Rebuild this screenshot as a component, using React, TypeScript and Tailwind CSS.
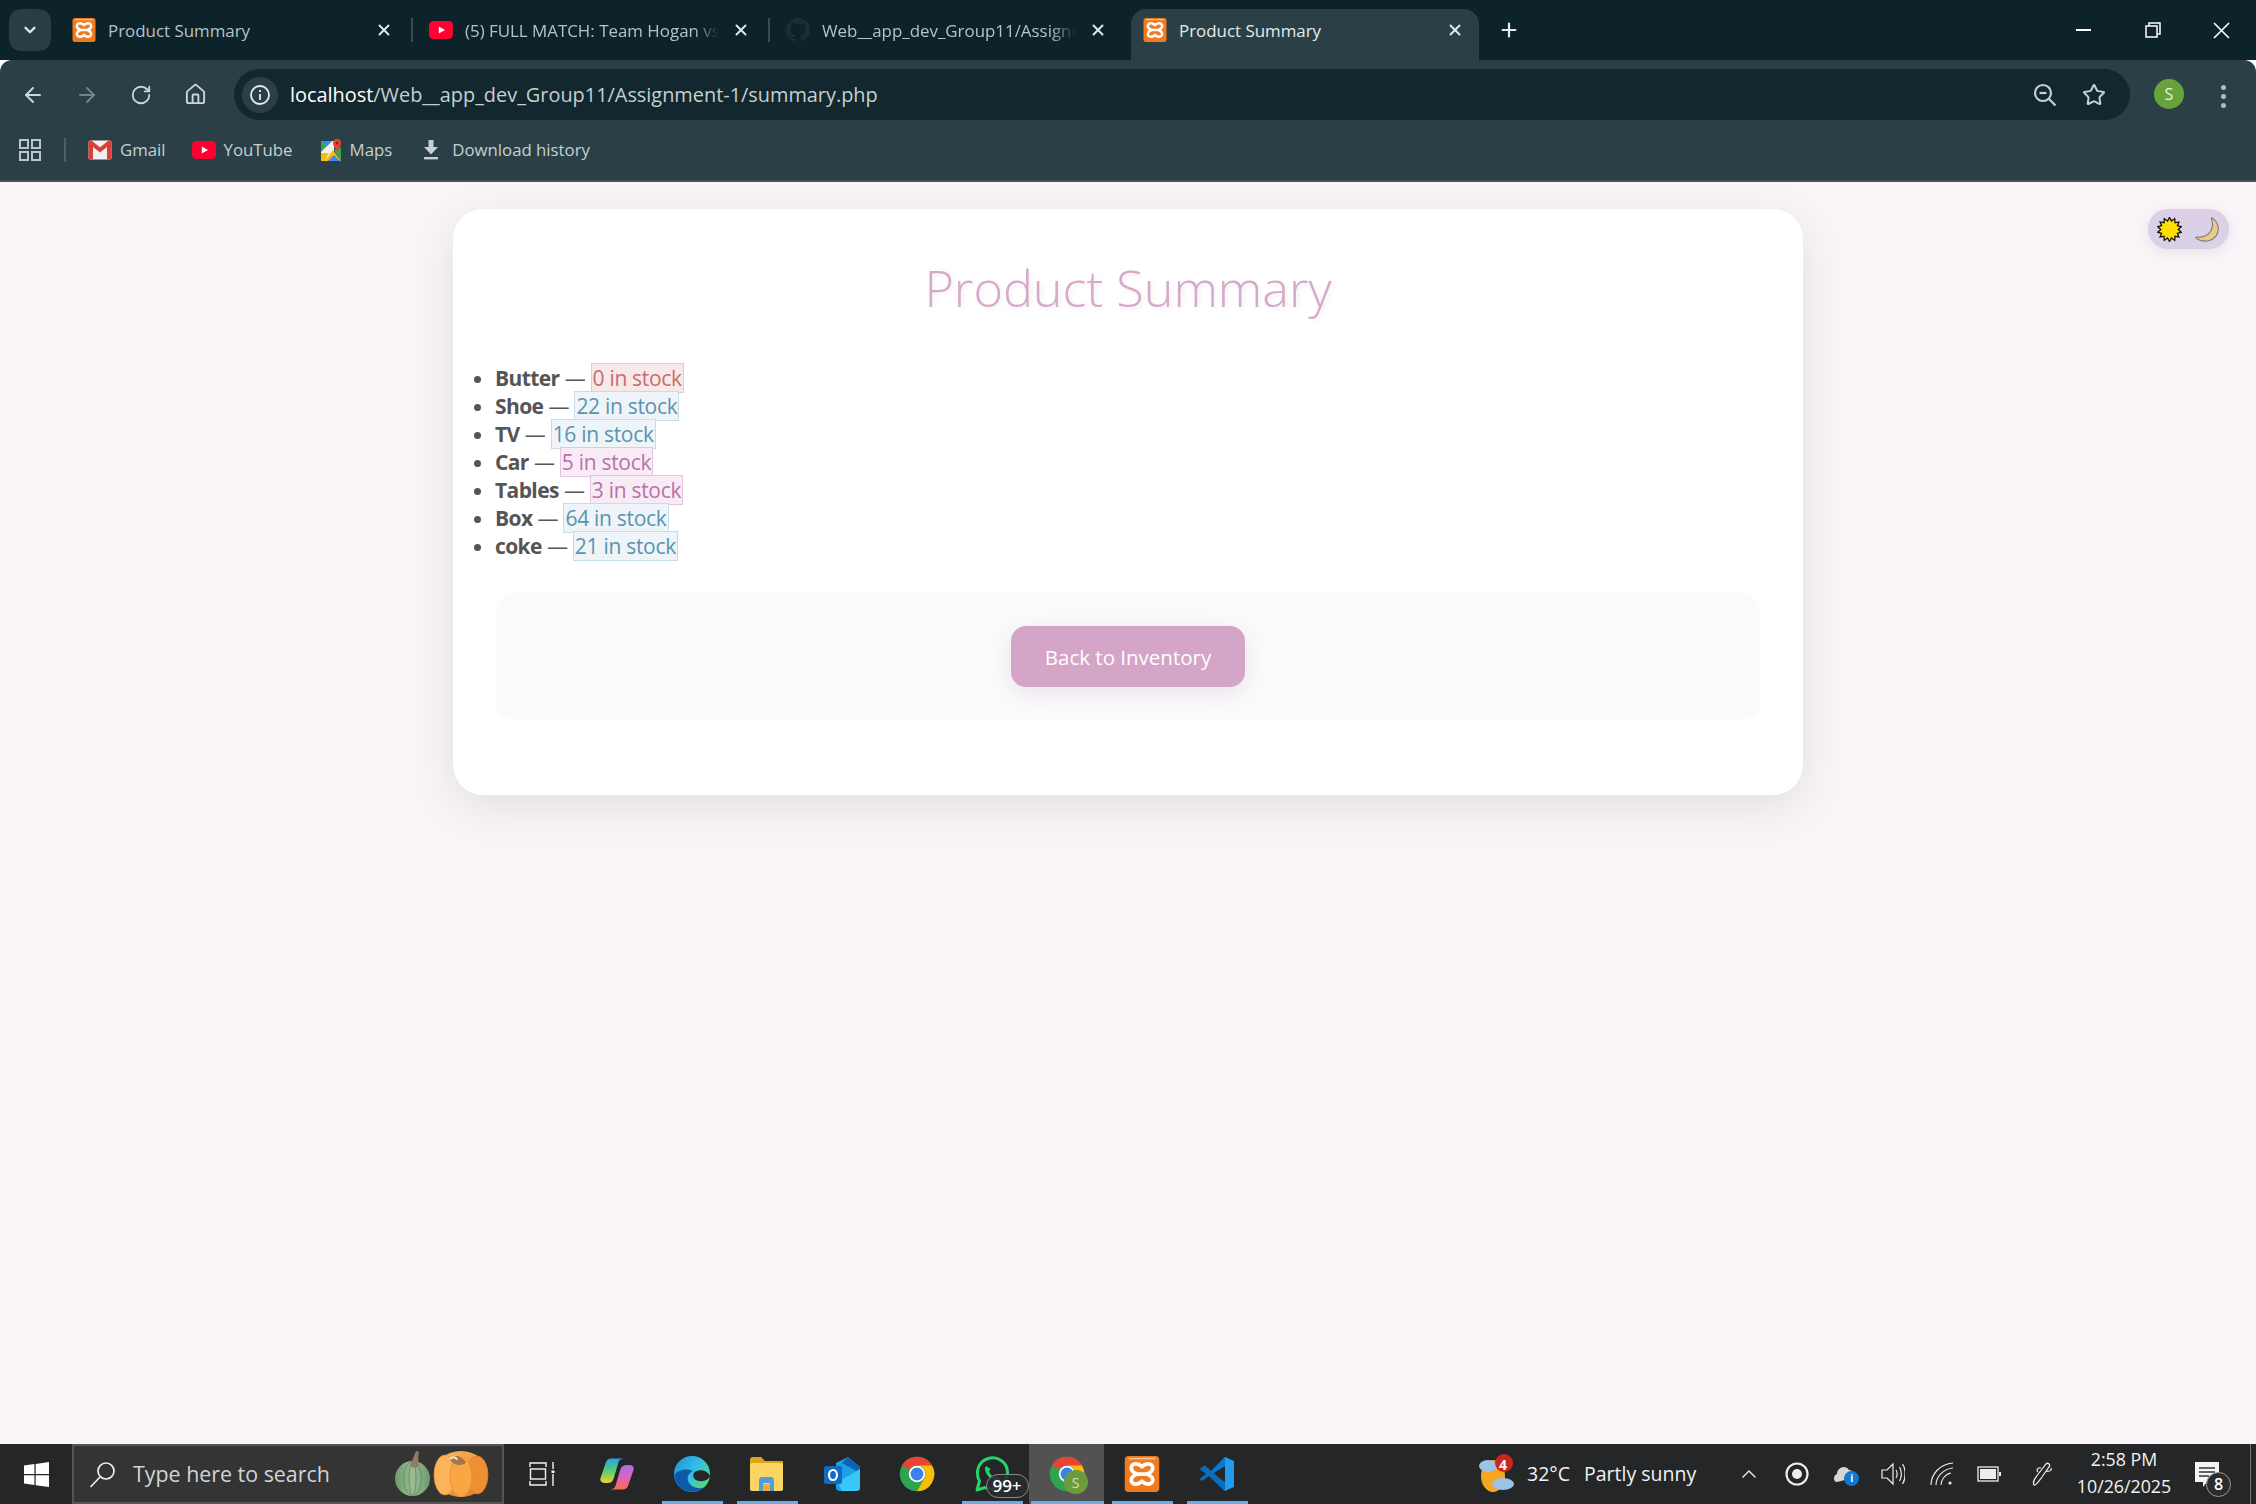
import React from "react";
import { ArrowLeft, ArrowRight, RotateCw, House, Star, X, Plus, ChevronDown, ChevronUp } from "lucide-react";

const ui = "font-['Open_Sans','Noto_Sans',sans-serif]";

function Xampp({ s = 24 }: { s?: number }) {
  return (
    <svg width={s} height={s} viewBox="0 0 24 24" className="shrink-0">
      <rect x="0.5" y="0" width="23" height="24" rx="2.5" fill="#f07a1c" />
      <rect x="3" y="1.2" width="18" height="1" fill="#f9c69a" />
      <path d="M12 7.2 C10 5 6.2 4.4 5 7 C4.2 9 6 11 8.6 12 C6 13 4.2 15 5 17 C6.2 19.6 10 19 12 16.8 C14 19 17.8 19.6 19 17 C19.8 15 18 13 15.4 12 C18 11 19.8 9 19 7 C17.8 4.4 14 5 12 7.2 Z M8.6 12 H15.4" fill="none" stroke="#fff" strokeWidth="2.5" strokeLinejoin="round" />
    </svg>
  );
}

function Yt() {
  return (
    <svg width="24" height="24" viewBox="0 0 24 24" className="shrink-0">
      <rect x="0" y="3" width="24" height="18" rx="4.5" fill="#ff0033" />
      <path d="M9.8 8.4 L16 12 L9.8 15.6 Z" fill="#fff" />
    </svg>
  );
}

function GitHub() {
  return (
    <svg width="24" height="24" viewBox="0 0 16 16" className="shrink-0" fill="#1c2f36">
      <path d="M8 0C3.58 0 0 3.58 0 8c0 3.54 2.29 6.53 5.47 7.59.4.07.55-.17.55-.38 0-.19-.01-.82-.01-1.49-2.01.37-2.53-.49-2.69-.94-.09-.23-.48-.94-.82-1.13-.28-.15-.68-.52-.01-.53.63-.01 1.08.58 1.23.82.72 1.21 1.87.87 2.33.66.07-.52.28-.87.51-1.07-1.78-.2-3.64-.89-3.64-3.95 0-.87.31-1.59.82-2.15-.08-.2-.36-1.02.08-2.12 0 0 .67-.21 2.2.82.64-.18 1.32-.27 2-.27s1.36.09 2 .27c1.53-1.04 2.2-.82 2.2-.82.44 1.1.16 1.92.08 2.12.51.56.82 1.27.82 2.15 0 3.07-1.87 3.75-3.65 3.95.29.25.54.73.54 1.48 0 1.07-.01 1.93-.01 2.2 0 .21.15.46.55.38A8 8 0 0 0 16 8c0-4.42-3.58-8-8-8z" />
    </svg>
  );
}

function Tab({ icon, title, active, faded, sep }: { icon: React.ReactNode; title: string; active?: boolean; faded?: boolean; sep?: boolean }) {
  return (
    <div className={`relative h-[51px] flex items-center pl-[12px] pr-[12px] pb-[9px] ${active ? "w-[348px] bg-[#2a4046] rounded-t-[15px]" : "w-[357px]"}`}>
      {icon}
      <span className={`ml-[12px] mt-[2px] w-[254px] overflow-hidden whitespace-nowrap text-[16.9px] ${active ? "text-[#e4ebec]" : "text-[#b4c3c6]"} ${faded ? "[mask-image:linear-gradient(to_right,black_90%,transparent)]" : ""}`}>{title}</span>
      <X size={18} strokeWidth={2.6} className={`absolute top-[12px] text-[#dfe7e8] ${active ? "right-[15px]" : "right-[24px]"}`} />
      {sep && <div className="absolute right-[4px] top-[9px] w-[2px] h-[24px] bg-[#3a4d52]" />}
    </div>
  );
}

function Gmail() {
  return (
    <svg width="24" height="20" viewBox="0 0 24 20" className="shrink-0">
      <rect x="0.5" y="0.5" width="23" height="19" rx="2" fill="#f4eeee" />
      <path d="M0.5 2.5 V19.5 H5 V7 L12 12.5 L19 7 V19.5 H23.5 V2.5 C23.5 0.5 21.5 0 20 1 L12 7.2 L4 1 C2.5 0 0.5 0.5 0.5 2.5 Z" fill="#d9403a" />
    </svg>
  );
}

function Maps() {
  return (
    <svg width="21" height="24" viewBox="0 0 21 24" className="shrink-0">
      <path d="M0 3 H13 V23 H0 Z" fill="#f2f2f2" />
      <path d="M0 3 H11 L0 14 Z" fill="#34a853" />
      <path d="M1 3 H11 L6 8 Z" fill="#4285f4" />
      <path d="M0 23 L0 15 L8 15 L4 23 Z" fill="#fbbc04" />
      <path d="M4 23 L12 12 L20 23 Z" fill="#fbbc04" />
      <path d="M7 23 L13 17 L19 23 Z" fill="#4285f4" />
      <path d="M13 12 L20 9 L20 23 L18 20 Z" fill="#34a853" />
      <path d="M16 14 C13.5 9 12 8 12 5 A4 4 0 0 1 20 5 C20 8 18.5 9 16 14 Z" fill="#ea4335" />
      <circle cx="16" cy="5" r="1.5" fill="#8c2219" />
    </svg>
  );
}

function Bookmark({ icon, label, ml }: { icon: React.ReactNode; label: string; ml: string }) {
  return (
    <div className={`flex items-center ${ml}`}>
      {icon}
      <span className="ml-[8px] text-[16.8px] text-[#c5d0d2] whitespace-nowrap">{label}</span>
    </div>
  );
}

function Sun() {
  const pts: string[] = [];
  const n = 14;
  for (let i = 0; i < n * 2; i++) {
    const r = i % 2 === 0 ? 11.6 : 8.4;
    const a = (i * Math.PI) / n;
    pts.push(`${12 + r * Math.sin(a)},${12 - r * Math.cos(a)}`);
  }
  return (
    <svg width="25" height="25" viewBox="0 0 24 24">
      <polygon points={pts.join(" ")} fill="#ffdf00" stroke="#111" strokeWidth="1.2" />
    </svg>
  );
}

function Moon() {
  return (
    <svg width="25" height="25" viewBox="0 0 24 24">
      <path d="M16.5 0.8 C22.5 5 24 12.5 20.3 18 C16.5 23.5 7.5 25 1 20.5 C0.5 20 0.8 19.2 1.6 19.3 C7 20 13 18 15.5 13 C17.2 9.5 17 5 15.7 1.5 C15.6 0.8 16 0.5 16.5 0.8 Z" fill="#eac98d" stroke="#77777f" strokeWidth="1" />
    </svg>
  );
}

const items: { name: string; qty: number; kind: "red" | "blue" | "pink" }[] = [
  { name: "Butter", qty: 0, kind: "red" },
  { name: "Shoe", qty: 22, kind: "blue" },
  { name: "TV", qty: 16, kind: "blue" },
  { name: "Car", qty: 5, kind: "pink" },
  { name: "Tables", qty: 3, kind: "pink" },
  { name: "Box", qty: 64, kind: "blue" },
  { name: "coke", qty: 21, kind: "blue" },
];

const badge = {
  red: "bg-[#f8e9e9] border-[#efc4c4] text-[#c96b6b]",
  blue: "bg-[#eef4f8] border-[#c6dde8] text-[#5b94ae]",
  pink: "bg-[#f7ecf5] border-[#e6c3df] text-[#b971a9]",
};

function Chrome({ s = 36 }: { s?: number }) {
  return (
    <svg width={s} height={s} viewBox="0 0 48 48">
      <circle cx="24" cy="24" r="23" fill="#2da44e" />
      <path d="M24 1 A23 23 0 0 1 44 12.5 L24 12.5 A11.5 11.5 0 0 0 14 18.2 L4 12.5 A23 23 0 0 1 24 1 Z" fill="#ea4335" />
      <path d="M44 12.5 A23 23 0 0 1 24 47 L34 29.7 A11.5 11.5 0 0 0 24 12.5 Z" fill="#fbbc04" />
      <circle cx="24" cy="24" r="11" fill="#fff" />
      <circle cx="24" cy="24" r="8.6" fill="#3b82e8" />
    </svg>
  );
}

function TaskCell({ children, underline, active }: { children?: React.ReactNode; underline?: boolean; active?: boolean }) {
  return (
    <div className={`relative w-[75px] h-full flex items-center justify-center ${active ? "bg-[#525252]" : ""}`}>
      {children}
      {underline && <div className={`absolute bottom-0 h-[3px] bg-[#66ace6] ${active ? "left-[2px] right-0" : "left-[8px] right-[6px]"}`} />}
    </div>
  );
}

export default function App() {
  return (
    <div className={`h-[1504px] w-[2256px] flex flex-col overflow-hidden ${ui}`}>
      {/* Tab strip */}
      <div className="relative h-[60px] shrink-0 bg-[#0b2329] flex items-end">
        <div className="ml-[9px] mb-[9px] w-[42px] h-[42px] rounded-[12px] bg-[#283e44] flex items-center justify-center">
          <ChevronDown size={18} strokeWidth={3} className="text-[#e4ebec]" />
        </div>
        <div className="ml-[9px] flex items-end">
          <Tab icon={<Xampp />} title="Product Summary" sep />
          <Tab icon={<Yt />} title="(5) FULL MATCH: Team Hogan vs" faded sep />
          <Tab icon={<GitHub />} title="Web__app_dev_Group11/Assignment" faded />
          <Tab icon={<Xampp />} title="Product Summary" active />
        </div>
        <Plus size={22} strokeWidth={2.4} className="mb-[19px] ml-[19px] text-[#e4ebec]" />
        <div className="ml-auto flex h-[60px] items-center">
          <div className="w-[69px] flex justify-center"><div className="w-[15px] h-[2px] bg-white" /></div>
          <div className="w-[69px] flex justify-center">
            <svg width="16" height="16" viewBox="0 0 16 16" fill="none" stroke="#fff" strokeWidth="1.5"><rect x="1" y="4" width="11" height="11" /><path d="M4 4 V1 H15 V12 H12" /></svg>
          </div>
          <div className="w-[69px] flex justify-center">
            <svg width="17" height="17" viewBox="0 0 17 17" stroke="#fff" strokeWidth="1.6"><path d="M1 1 L16 16 M16 1 L1 16" /></svg>
          </div>
        </div>
      </div>

      {/* Toolbar */}
      <div className="h-[60px] shrink-0 bg-[#2a4046] rounded-t-[12px] flex items-start pt-[9px]">
        <div className="flex h-[51px] items-center text-[#c9d5d7] pl-[21px]">
          <ArrowLeft size={24} strokeWidth={2} />
          <ArrowRight size={24} strokeWidth={2} className="ml-[30px] text-[#71858a]" />
          <RotateCw size={22} strokeWidth={2} className="ml-[31px]" />
          <House size={23} strokeWidth={2} className="ml-[32px]" />
        </div>
        <div className="ml-[27px] w-[1896px] h-[51px] rounded-full bg-[#12282e] flex items-center pl-[8px] pr-[24px]">
          <div className="w-[36px] h-[36px] rounded-full bg-[#2a4046] flex items-center justify-center">
            <svg width="22" height="22" viewBox="0 0 22 22" fill="none" stroke="#e4ebec" strokeWidth="1.8"><circle cx="11" cy="11" r="9" /><path d="M11 10 V16 M11 6 V8" /></svg>
          </div>
          <div className="ml-[12px] text-[19.9px] whitespace-nowrap text-[#c5d0d2]"><span className="text-white">localhost</span>/Web__app_dev_Group11/Assignment-1/summary.php</div>
          <svg width="24" height="24" viewBox="0 0 24 24" fill="none" stroke="#c5d0d2" strokeWidth="2.2" className="ml-auto -translate-x-[2px]"><circle cx="10" cy="10" r="8" /><path d="M15.8 15.8 L22.5 22.5" /><path d="M6.5 10 H13.5" /></svg>
          <Star size={24} strokeWidth={2} className="ml-[23px] text-[#c5d0d2]" />
        </div>
        <div className="ml-[24px] mt-[10px] w-[30px] h-[30px] rounded-full bg-[#68a23b] flex items-center justify-center text-[#e8f1de] text-[16px]">S</div>
        <div className="ml-[37px] mt-[16px] flex flex-col gap-[4.5px]">
          <div className="w-[4.5px] h-[4.5px] rounded-full bg-[#a9c0c4]" />
          <div className="w-[4.5px] h-[4.5px] rounded-full bg-[#a9c0c4]" />
          <div className="w-[4.5px] h-[4.5px] rounded-full bg-[#a9c0c4]" />
        </div>
      </div>

      {/* Bookmarks */}
      <div className="h-[62px] shrink-0 bg-[#2a4046] border-b-[2px] border-[#455358] flex items-center pl-[19px]">
        <svg width="22" height="22" viewBox="0 0 22 22" fill="none" stroke="#b9c7ca" strokeWidth="2"><rect x="1" y="1" width="8" height="8" /><rect x="13" y="1" width="8" height="8" /><rect x="1" y="13" width="8" height="8" /><rect x="13" y="13" width="8" height="8" /></svg>
        <div className="ml-[23px] w-[2px] h-[24px] bg-[#4d6166]" />
        <Bookmark icon={<Gmail />} label="Gmail" ml="ml-[22px]" />
        <Bookmark icon={<Yt />} label="YouTube" ml="ml-[26px]" />
        <Bookmark icon={<Maps />} label="Maps" ml="ml-[28px]" />
        <div className="flex items-center ml-[31px]">
          <svg width="16" height="20" viewBox="0 0 16 20" fill="#c5d0d2" className="shrink-0"><path d="M5.5 0 H10.5 V7 H15 L8 14.5 L1 7 H5.5 Z" /><rect x="1" y="17" width="14" height="2.4" /></svg>
          <span className="ml-[13px] text-[16.8px] text-[#c5d0d2] whitespace-nowrap">Download history</span>
        </div>
      </div>

      {/* Page */}
      <div className="relative flex-1 bg-[#f8f4f8] pt-[27px]">
        <div className="absolute top-[27px] right-[27px] w-[81px] h-[40px] rounded-full bg-[#dbd0e6] shadow-[0_3px_12px_rgba(0,0,0,0.08)] flex items-center justify-between px-[9px]">
          <Sun />
          <Moon />
        </div>
        <div className="w-[1350px] mx-auto bg-white rounded-[30px] shadow-[0_12px_45px_rgba(0,0,0,0.09)] px-[42px] pt-[42px] pb-[75px]">
          <h1 className="text-[#d8a8ca] text-[50.3px] leading-[76px] -mt-[1px] font-light text-center [text-shadow:2px_2px_5px_rgba(0,0,0,0.08)]">Product Summary</h1>
          <ul className="mt-[38px] list-disc text-[21px] tracking-[-0.3px] leading-[28px] text-[#555]">
            {items.map((it) => (
              <li key={it.name}>
                <b className="font-bold tracking-[-0.6px]">{it.name}</b> — <span className={`border-[1.5px] px-[1px] ${badge[it.kind]}`}>{it.qty} in stock</span>
              </li>
            ))}
          </ul>
          <div className="mt-[33px] rounded-[20px] bg-[#fafbfb] py-[33px] flex justify-center">
            <div className="w-[234px] h-[61px] rounded-[15px] bg-[#d4a5c6] text-white text-[20.5px] pt-[1px] flex items-center justify-center shadow-[0_6px_22px_rgba(180,120,170,0.2)]">Back to Inventory</div>
          </div>
        </div>
      </div>

      {/* Taskbar */}
      <div className="h-[60px] shrink-0 bg-[#252627] flex items-stretch relative">
        <div className="w-[72px] flex items-center justify-center">
          <svg width="25" height="25" viewBox="0 0 24 24" fill="#fff"><path d="M0 3.4 L10 2 V11.4 H0 Z M11.2 1.8 L24 0 V11.4 H11.2 Z M0 12.6 H10 V22 L0 20.6 Z M11.2 12.6 H24 V24 L11.2 22.2 Z" /></svg>
        </div>
        <div className="w-[432px] bg-[#343434] border-[2.5px] border-[#555] flex items-center pl-[15px]">
          <svg width="27" height="27" viewBox="0 0 27 27" fill="none" stroke="#eee" strokeWidth="1.7"><circle cx="17" cy="10" r="8" /><path d="M11 16 L1.5 26" /></svg>
          <span className="ml-[17px] text-[21.4px] text-[#d0d5d8]">Type here to search</span>
          <svg width="94" height="46" viewBox="0 0 94 46" className="ml-auto mr-[13px]">
            <defs>
              <linearGradient id="pk" x1="0" y1="0" x2="1" y2="1"><stop offset="0" stopColor="#fbbd66" /><stop offset="1" stopColor="#e8781f" /></linearGradient>
              <linearGradient id="gp" x1="0" y1="0" x2="1" y2="0"><stop offset="0" stopColor="#6d9c6d" /><stop offset="0.5" stopColor="#9dbb92" /><stop offset="1" stopColor="#6a9a72" /></linearGradient>
            </defs>
            <ellipse cx="17.5" cy="27.5" rx="17.5" ry="17.5" fill="url(#gp)" />
            <ellipse cx="17.5" cy="27.5" rx="9" ry="17" fill="none" stroke="#5f8c62" strokeWidth="0.8" />
            <ellipse cx="17.5" cy="27.5" rx="3.5" ry="17" fill="none" stroke="#5f8c62" strokeWidth="0.8" />
            <path d="M15 15 C17 10 19 5 21 0 L24 1 C23 6 23 10 24 15 C21 17 18 17 15 15 Z" fill="#8f7a66" />
            <ellipse cx="66" cy="23" rx="27" ry="23" fill="url(#pk)" />
            <ellipse cx="50" cy="24" rx="11" ry="20" fill="#fbb45c" stroke="#e9882d" strokeWidth="0.7" />
            <ellipse cx="82" cy="24" rx="11" ry="19" fill="#ee8f33" stroke="#de7a22" strokeWidth="0.7" />
            <ellipse cx="66" cy="26" rx="11" ry="20" fill="#f9a645" stroke="#e9882d" strokeWidth="0.7" />
            <path d="M55 9 C57 5 62 4 65 6 C69 9 73 11 69 13 C65 15 58 14 55 9 Z" fill="#a5764a" />
            <path d="M55 8 C58 5 61 6 62 9" fill="none" stroke="#f2e2c8" strokeWidth="2" />
          </svg>
        </div>
        <div className="flex items-center">
          <div className="flex h-full">
            <TaskCell>
              <svg width="26" height="26" viewBox="0 0 26 26" fill="none" stroke="#f2f2f2" strokeWidth="1.4"><path d="M1 6 V2 H17 V6 M1 20 V24 H17 V20" /><rect x="1.5" y="8" width="15" height="10" /><path d="M24 1 V8 M24 13 V25" /><rect x="22.5" y="9.5" width="3" height="2.5" fill="#f2f2f2" stroke="none" /></svg>
            </TaskCell>
            <TaskCell>
              <svg width="34" height="32" viewBox="0 0 34 32">
                <defs>
                  <linearGradient id="cp1" x1="0" y1="0" x2="0" y2="1"><stop offset="0" stopColor="#2a9fe8" /><stop offset="0.55" stopColor="#5fd06a" /><stop offset="1" stopColor="#f7d02f" /></linearGradient>
                  <linearGradient id="cp2" x1="0" y1="0" x2="0" y2="1"><stop offset="0" stopColor="#a970e6" /><stop offset="0.6" stopColor="#e562b0" /><stop offset="1" stopColor="#f8703a" /></linearGradient>
                </defs>
                <path d="M11 0.5 H23 C20 1 18.5 3 18 6 L13.5 21 C12.5 24 10 25 7 25 H4 C1.5 25 -0.5 22.5 0.5 20 L6 4 C7 1.5 9 0.5 11 0.5 Z" fill="url(#cp1)" />
                <path d="M23 31.5 H11 C14 31 15.5 29 16 26 L20.5 11 C21.5 8 24 7 27 7 H30 C32.5 7 34.5 9.5 33.5 12 L28 28 C27 30.5 25 31.5 23 31.5 Z" fill="url(#cp2)" />
              </svg>
            </TaskCell>
            <TaskCell underline>
              <svg width="36" height="36" viewBox="0 0 36 36">
                <defs><linearGradient id="ed" x1="0" y1="0" x2="1" y2="0.7"><stop offset="0" stopColor="#1a8fd8" /><stop offset="0.55" stopColor="#33bfe6" /><stop offset="1" stopColor="#59d97a" /></linearGradient></defs>
                <circle cx="18" cy="18" r="18" fill="url(#ed)" />
                <path d="M0.3 20 C2 31 11 36 18 36 C23 36 27 34.5 30 31.5 C24 33.5 17 31 14.5 26 C12.5 21.5 14.5 17 19 15 C11 12 2.5 14 0.3 20 Z" fill="#0d5ba8" />
                <path d="M36 20 C34 15 27 12.5 21.5 15.5 C18 17.5 18.5 23 23 24.5 C28 26 34 25 36 20 Z" fill="#252627" />
              </svg>
            </TaskCell>
            <TaskCell underline>
              <svg width="33" height="36" viewBox="0 0 33 36">
                <path d="M0 4 C0 2 1 1 3 1 H11 L15 5 H33 V12 H0 Z" fill="#dca511" />
                <rect x="0" y="7" width="33" height="28" rx="2" fill="#fbd564" />
                <path d="M9 35 V25 C9 22 10 21 12 21 H21 C23 21 24 22 24 25 V35 H20 V27 H13 V35 Z" fill="#4e9fd9" />
                <rect x="13" y="28" width="7" height="7" fill="#f3a93c" />
              </svg>
            </TaskCell>
            <TaskCell>
              <svg width="36" height="34" viewBox="0 0 36 34">
                <path d="M12 6 L24 0 L36 10 V31 C36 33 34 34 32 34 H16 C14 34 12 33 12 31 Z" fill="#1d9fe8" />
                <path d="M18 6 L24 0 L36 10 V16 Z" fill="#0f62b8" />
                <path d="M14 25 L36 12 V31 C36 33 34 34 32 34 H18 Z" fill="#37c8f5" />
                <rect x="0" y="9" width="18" height="18" rx="2" fill="#0f6cc4" />
                <ellipse cx="9" cy="18" rx="4" ry="5" fill="none" stroke="#fff" strokeWidth="2.2" />
              </svg>
            </TaskCell>
            <TaskCell><Chrome /></TaskCell>
            <TaskCell underline>
              <div className="relative w-[36px] h-[36px]">
                <svg width="36" height="36" viewBox="0 0 36 36" fill="none">
                  <path d="M3 34 L5.5 25 C1 17 4 6 13 3 C23 -1 33 6 33.5 16 C34 28 21 36 11 31.5 Z" stroke="#25d366" strokeWidth="3" strokeLinejoin="round" />
                  <path d="M12 10 C10 12 11 17 15 21 C19 25 24 26 26 24 L23 20 L20.5 21.5 C18 20 16 18 15 15.5 L16.5 13 Z" fill="#25d366" />
                </svg>
                <div className="absolute left-[12px] top-[18px] w-[43px] h-[24px] rounded-full bg-[#2a2b2c]/90 border border-[#8a8a8a] text-white text-[17px] font-semibold leading-[22px] text-center">99+</div>
              </div>
            </TaskCell>
            <TaskCell underline active>
              <div className="relative w-[36px] h-[36px]">
                <Chrome />
                <div className="absolute left-[15px] top-[14px] w-[24px] h-[24px] rounded-full bg-[#6c9a3c] text-[#cfe0b4] text-[14px] flex items-center justify-center">S</div>
              </div>
            </TaskCell>
            <TaskCell underline><Xampp s={36} /></TaskCell>
            <TaskCell underline>
              <svg width="36" height="36" viewBox="0 0 36 36">
                <path d="M26 1 L35 5 V31 L26 35 L9 19 L26 1 Z" fill="#1f9cf0" />
                <path d="M26 1 L26 35 L12 21 V15 Z" fill="#0078d4" opacity="0.9" />
                <path d="M26 10 L13 18 L26 26 Z" fill="#252627" />
                <path d="M3 11 L6 9.5 L26 27 V35 L10 20 L3 25 L0.5 23 L7 18 L0.5 13 Z" fill="#0a6cbd" />
              </svg>
            </TaskCell>
          </div>
        </div>

        <div className="absolute left-[1479px] top-[10px] w-[36px] h-[40px]">
          <svg width="36" height="40" viewBox="0 0 36 40">
            <ellipse cx="14" cy="22" rx="12" ry="16" fill="#f5a623" />
            <ellipse cx="9" cy="12" rx="9" ry="6" fill="#9cc3e8" />
            <ellipse cx="24" cy="30" rx="11" ry="6" fill="#9cc3e8" />
            <circle cx="25" cy="9" r="9" fill="#c8281e" />
          </svg>
          <span className="absolute left-[20px] top-[0px] text-white text-[14px] font-bold">4</span>
        </div>
        <div className="ml-[273px] flex items-center text-[#f2f2f2] text-[19.5px]">
          <span className="w-[57px]">32°C</span>
          <span>Partly sunny</span>
        </div>
        <div className="ml-[41px] flex items-center">
          <ChevronUp size={24} strokeWidth={1.4} className="text-[#eee]" />
          <svg width="24" height="24" viewBox="0 0 24 24" className="ml-[24px]" fill="none" stroke="#eee" strokeWidth="2.2"><circle cx="12" cy="12" r="10.5" /><circle cx="12" cy="12" r="5" fill="#eee" stroke="none" /></svg>
          <div className="relative ml-[24px] w-[24px] h-[24px]">
            <svg width="24" height="24" viewBox="0 0 24 24"><path d="M4 20 C0 20 0 13 4 12 C4 6 12 2 16 8 C20 8 22 12 20 16 Z" fill="#d6d6d6" /></svg>
            <div className="absolute left-[11px] top-[9px] w-[15px] h-[15px] rounded-full bg-[#0f78d4] text-white text-[10px] font-bold leading-[15px] text-center">i</div>
          </div>
          <svg width="24" height="26" viewBox="0 0 24 26" className="ml-[24px]" fill="none" stroke="#eee" strokeWidth="1.2"><path d="M1 9 H6 L12 3 V23 L6 17 H1 Z" /><path d="M15 9 C16.5 11 16.5 15 15 17 M18.5 6 C21 10 21 16 18.5 20 M21.5 3 C25 8 25 18 21.5 23" /></svg>
          <svg width="24" height="24" viewBox="0 0 24 24" className="ml-[25px]" fill="none" stroke="#eee" strokeWidth="1.1"><path d="M1 23 C1 12 10 2 23 1 M6 23 C6 15 13 7 23 6 M11 23 C11 18 15 12 21 11" /><circle cx="20" cy="21" r="1.6" fill="#eee" stroke="none" /></svg>
          <svg width="24" height="16" viewBox="0 0 24 16" className="ml-[23px]"><rect x="1" y="1" width="20" height="14" fill="none" stroke="#eee" strokeWidth="1.3" /><rect x="3" y="3" width="16" height="10" fill="#eee" /><rect x="22" y="6" width="2" height="4" fill="#eee" /></svg>
          <svg width="24" height="24" viewBox="0 0 24 24" className="ml-[30px]" fill="none" stroke="#eee" strokeWidth="1.2"><path d="M3 23 C1 20 4 16 8 11 L15 2 C17 0 20 3 18 5 L11 15 C8 19 5 24 3 23 Z M10 6 C7 5 5 8 7 10 M15 9 C19 10 21 8 20 6" /></svg>
        </div>
        <div className="absolute left-[2040px] -top-[1px] w-[168px] h-[60px] flex flex-col items-center justify-center text-[#f2f2f2] text-[17.8px] leading-[27px]">
          <span>2:58 PM</span>
          <span>10/26/2025</span>
        </div>
        <div className="absolute left-[2195px] top-[18px] w-[36px] h-[36px]">
          <svg width="24" height="28" viewBox="0 0 24 28"><path d="M0 0 H24 V20 H12 L8 25 V20 H0 Z" fill="#f4f4f4" /><path d="M4 6 H20 M4 10 H20 M4 14 H14" stroke="#333" strokeWidth="1.4" /></svg>
          <div className="absolute left-[11px] top-[10px] w-[25px] h-[25px] rounded-full bg-[#2a2b2c] border border-[#999] text-white text-[16px] font-semibold leading-[23px] text-center">8</div>
        </div>
        <div className="absolute right-[5px] top-0 bottom-0 w-[1px] bg-[#777]" />
      </div>
    </div>
  );
}
